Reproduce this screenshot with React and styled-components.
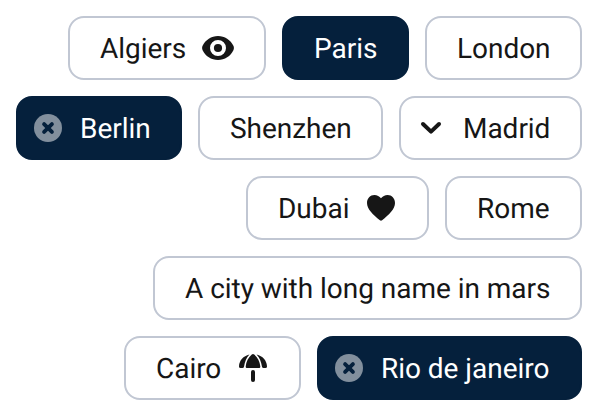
import React from "react";
import styled, { createGlobalStyle } from "styled-components";

const GlobalStyle = createGlobalStyle`
  body { margin: 0; background: #fff; }
`;

const ChipList = styled.div`
  box-sizing: border-box;
  width: 598px;
  padding: 16px;
  display: flex;
  flex-direction: column;
  gap: 16px;
  font-family: Roboto, sans-serif;
`;

const ChipRow = styled.div`
  display: flex;
  justify-content: flex-end;
  gap: 16px;
`;

const Chip = styled.button`
  box-sizing: border-box;
  flex: none;
  width: ${(p) => p.$width}px;
  height: 64px;
  margin: 0;
  padding: 0 30px 0 ${(p) => (p.$leading ? 14 : 30)}px;
  display: flex;
  align-items: center;
  justify-content: ${(p) => (p.$leading ? "flex-start" : "space-between")};
  gap: ${(p) => (p.$leading ? 16 : 0)}px;
  border: 2px solid ${(p) => (p.$selected ? "#05203c" : "#c1c7d3")};
  border-radius: 16px;
  background: ${(p) => (p.$selected ? "#05203c" : "#fff")};
  color: ${(p) => (p.$selected ? "#fff" : "#161616")};
  font: 400 28px/40px Roboto, sans-serif;
  text-rendering: geometricPrecision;
  white-space: nowrap;
`;

const Label = styled.span`
  padding-top: 2px;
  letter-spacing: -0.03px;
`;

const Icon = styled.svg`
  flex: none;
  width: 32px;
  height: 32px;
  display: block;
`;

const Eye = () => (
  <Icon viewBox="0 0 32 32">
    <path fill="#161616" fillRule="evenodd" d="M16 4C9.400 4 3.300 8 0.600 13.800Q-0.400 16 0.600 18.200C3.300 24 9.400 28 16 28S28.700 24 31.400 18.200Q32.400 16 31.400 13.800C28.700 8 22.600 4 16 4ZM16 8A8 8 0 1 1 16 24A8 8 0 0 1 16 8Z" />
    <circle cx="16" cy="16" r="4.100" fill="#161616" />
  </Icon>
);

const Close = () => (
  <Icon viewBox="0 0 32 32">
    <circle cx="16" cy="16" r="14" fill="#828f9d" />
    <path d="M12.100 12.100L19.900 19.900M19.900 12.100L12.100 19.900" stroke="#05203c" strokeWidth="3.900" strokeLinecap="round" />
  </Icon>
);

const Chevron = () => (
  <Icon viewBox="0 0 32 32">
    <path d="M8 12L16 19.600L24 12" fill="none" stroke="#161616" strokeWidth="4" strokeLinecap="round" strokeLinejoin="round" />
  </Icon>
);

const Heart = () => (
  <Icon viewBox="0 0 32 32">
    <path fill="#161616" d="M14.900 28.200C8 22.300 2 17.400 2 10.900C2 6.300 5.300 3 9.400 3C12.100 3 14.500 4.300 16 6.300C17.500 4.300 19.900 3 22.600 3C26.700 3 30 6.300 30 10.900C30 17.400 24 22.300 17.100 28.200Q16 29.100 14.900 28.200Z" />
  </Icon>
);

const Umbrella = () => (
  <Icon viewBox="0 0 32 32">
    <path fill="#161616" d="M12.400 2.500C6.300 4 2.300 8.400 2 14.200Q1.900 16 3.600 16H5.500Q6.700 16 7 14.800C7.900 9.500 9.500 5.700 12.400 2.500ZM19.600 2.500C25.700 4 29.700 8.400 30 14.200Q30.100 16 28.400 16H26.500Q25.300 16 25 14.800C24.100 9.500 22.500 5.700 19.600 2.500ZM14.800 2.500Q16 1.700 17.200 2.500C20.700 5.400 22.900 9.600 23.300 14.600Q23.400 16 22.200 16H9.800Q8.600 16 8.700 14.600C9.100 9.600 11.300 5.400 14.800 2.500Z" />
    <path d="M16 20V28" stroke="#161616" strokeWidth="4" strokeLinecap="round" />
  </Icon>
);

const rows = [
  [{ name: "Algiers", width: 198, trailing: Eye }, { name: "Paris", width: 127, selected: true }, { name: "London", width: 157 }],
  [{ name: "Berlin", width: 166, selected: true, leading: Close }, { name: "Shenzhen", width: 185 }, { name: "Madrid", width: 183, leading: Chevron }],
  [{ name: "Dubai", width: 183, trailing: Heart }, { name: "Rome", width: 137 }],
  [{ name: "A city with long name in mars", width: 429 }],
  [{ name: "Cairo", width: 177, trailing: Umbrella }, { name: "Rio de janeiro", width: 265, selected: true, leading: Close }],
];

export default function App() {
  return (
    <>
      <GlobalStyle />
      <ChipList>
        {rows.map((row, i) => (
          <ChipRow key={i}>
            {row.map(({ name, width, selected, leading: Leading, trailing: Trailing }) => (
              <Chip key={name} $width={width} $selected={selected} $leading={!!Leading}>
                {Leading && <Leading />}
                <Label>{name}</Label>
                {Trailing && <Trailing />}
              </Chip>
            ))}
          </ChipRow>
        ))}
      </ChipList>
    </>
  );
}
